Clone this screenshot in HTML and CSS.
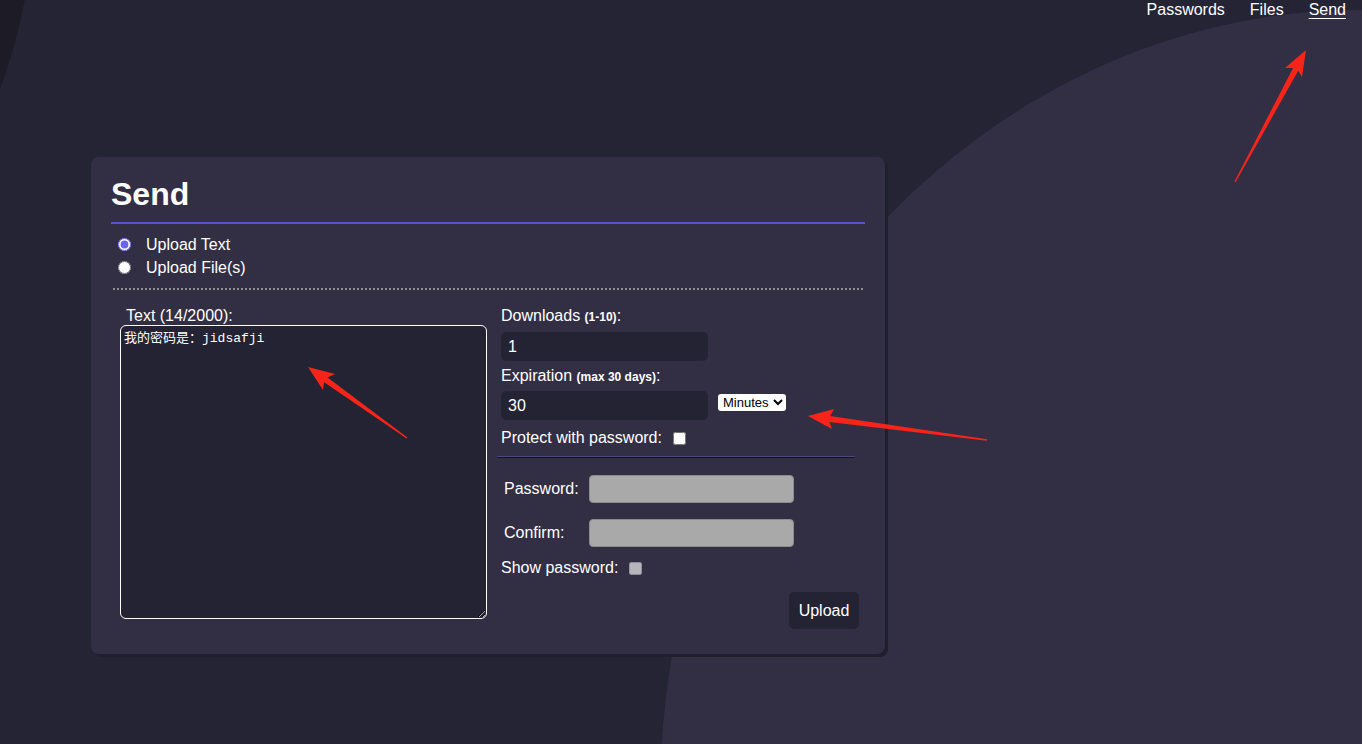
FILE: index.html
```html
<!DOCTYPE html>
<html lang="en">
<head>
  <meta charset="UTF-8">
  <meta name="viewport" content="width=device-width, initial-scale=1.0">
  <link rel="stylesheet" href="styles.css">
  <title>Send</title>
</head>
<body>

<div class="blob blob-dark"></div>
<div class="blob blob-light"></div>

<nav class="topnav">
  <a href="#">Passwords</a>
  <a href="#">Files</a>
  <a href="#" class="active">Send</a>
</nav>

<main class="page">
  <section class="card">
    <h1>Send</h1>

    <div class="modes">
      <label class="mode"><input type="radio" name="mode" checked><span>Upload Text</span></label>
      <label class="mode"><input type="radio" name="mode"><span>Upload File(s)</span></label>
    </div>

    <div class="dotted"></div>

    <div class="columns">
      <div class="text-col">
        <label for="text" class="text-label">Text (14/2000):</label>
        <textarea id="text">我的密码是：jidsafji</textarea>
      </div>

      <div class="opts-col">
        <label for="downloads">Downloads <small>(1-10)</small>:</label>
        <input id="downloads" class="dark-input" type="text" value="1">

        <label for="expiry" class="gap-label">Expiration <small>(max 30 days)</small>:</label>
        <div class="expiry-row">
          <input id="expiry" class="dark-input" type="text" value="30">
          <select>
            <option>Minutes</option>
            <option>Hours</option>
            <option>Days</option>
          </select>
        </div>

        <div class="check-row protect">
          <span>Protect with password:</span>
          <input type="checkbox">
        </div>

        <div class="divider"></div>

        <div class="pw-row first">
          <span class="pw-label">Password:</span>
          <input class="pw-input" type="password" disabled>
        </div>
        <div class="pw-row">
          <span class="pw-label">Confirm:</span>
          <input class="pw-input" type="password" disabled>
        </div>

        <div class="check-row show">
          <span>Show password:</span>
          <input type="checkbox" disabled>
        </div>

        <button class="upload-btn">Upload</button>
      </div>
    </div>
  </section>
</main>

<!-- annotation arrows drawn over the screenshot -->
<svg class="marks" width="1362" height="744" viewBox="0 0 1362 744">
  <polygon points="1306,50 1285,68 1293,68 1234.4,181.7 1235.6,182.3 1298.2,70.8 1302,77"/>
  <polygon points="308,367 335,374 327.6,377.4 407.4,437.4 406.6,438.6 324.1,382.2 323,390"/>
  <polygon points="808,416 834,409 830.2,415.9 987.1,439.2 986.9,440.8 829.4,421.9 832,429"/>
</svg>

</body>
</html>
```

FILE: styles.css
```css
body {
  margin: 0;
  height: 744px;
  overflow: hidden;
  background: #252434;
  color: #fff;
  font-family: "Liberation Sans", Arial, sans-serif;
  font-size: 16px;
  position: relative;
}

/* background shapes */
.blob {
  position: absolute;
  border-radius: 50%;
  z-index: 0;
}
.blob-dark {
  left: -1050px;
  top: -642px;
  width: 1084px;
  height: 1084px;
  background: #1c1b26;
}
.blob-light {
  left: 660px;
  top: 10px;
  width: 1400px;
  height: 1580px;
  background: #322f45;
}

.topnav {
  position: relative;
  z-index: 1;
  display: flex;
  justify-content: flex-end;
  gap: 25px;
  height: 18px;
  line-height: 18px;
  padding-top: 1px;
  padding-right: 16px;
}
.topnav a {
  color: #fff;
  text-decoration: none;
}
.topnav a.active {
  text-decoration: underline;
  text-underline-offset: 3px;
}

.page {
  position: relative;
  z-index: 1;
  padding: 138px 0 0 91px;
}

.card {
  box-sizing: border-box;
  width: 794px;
  height: 497px;
  padding: 19px 20px 0;
  background: #322f45;
  border-radius: 8px;
  box-shadow: 3px 3px 0 #201f2d;
}

.card h1 {
  margin: 0;
  font-size: 32px;
  line-height: 37px;
  padding-bottom: 9px;
  border-bottom: 2px solid #5a54d4;
}

.modes {
  margin-top: 9px;
}
.mode {
  display: flex;
  align-items: center;
  height: 23px;
}
.mode input {
  width: 13px;
  height: 13px;
  margin: 0 0 0 7px;
  accent-color: #6a63f2;
}
.mode span {
  margin-left: 15px;
}

.dotted {
  margin: 9px 2px 0;
  border-top: 2px dotted #8e8e92;
}

.columns {
  display: flex;
  margin-top: 17px;
}

.text-col {
  display: flex;
  flex-direction: column;
  margin-left: 9px;
  width: 367px;
}
.text-label {
  line-height: 18px;
  padding-left: 6px;
}
.text-col textarea {
  box-sizing: border-box;
  width: 367px;
  height: 294px;
  margin: 0;
  padding: 1px 3px;
  background: #242333;
  color: #fff;
  border: 1.5px solid #fff;
  border-radius: 6px;
  font-family: "Liberation Mono", "Noto Sans CJK SC", monospace;
  font-size: 13px;
  outline: none;
}

.opts-col {
  display: flex;
  flex-direction: column;
  align-items: flex-start;
  width: 362px;
  box-sizing: border-box;
  margin-left: 10px;
  padding-left: 4px;
}
.opts-col label {
  line-height: 18px;
}
.opts-col small {
  font-size: 12px;
  font-weight: bold;
}
.gap-label {
  margin-top: 6px;
}

.dark-input {
  box-sizing: border-box;
  width: 207px;
  height: 29px;
  margin-top: 6px;
  padding: 0 7px;
  background: #242333;
  color: #fff;
  border: none;
  border-radius: 5px;
  font-family: inherit;
  font-size: 16px;
}
.expiry-row {
  display: flex;
  align-items: center;
  margin-top: -1px;
}
.expiry-row select {
  margin-left: 10px;
  height: 17px;
  padding: 0 1px;
  background: #fff;
  color: #000;
  border: none;
  border-radius: 3px;
  font-family: inherit;
  font-size: 13px;
}

.check-row {
  display: flex;
  align-items: center;
  line-height: 18px;
}
.check-row input {
  width: 13px;
  height: 13px;
  margin: 0 0 0 11px;
}
.protect {
  margin-top: 9px;
}
.show {
  margin-top: 12px;
}

.divider {
  width: 358px;
  margin: 9px 0 0 -4px;
  border-top: 1px solid #4c4882;
  border-bottom: 1px solid #141320;
}

.pw-row {
  display: flex;
  align-items: center;
  margin-top: 16px;
}
.pw-row.first {
  margin-top: 17px;
}
.pw-label {
  width: 85px;
  padding-left: 3px;
}
.pw-input {
  box-sizing: border-box;
  width: 205px;
  height: 28px;
  background: #a9a9a9;
  border: 1px solid #8c8c8c;
  border-radius: 4px;
}

.upload-btn {
  align-self: flex-end;
  width: 70px;
  height: 37px;
  margin-top: 15px;
  background: #242333;
  color: #fff;
  border: none;
  border-radius: 5px;
  font-family: inherit;
  font-size: 16px;
}

.marks {
  position: absolute;
  left: 0;
  top: 0;
  z-index: 2;
  pointer-events: none;
}
.marks polygon {
  fill: #f7241a;
}
```
